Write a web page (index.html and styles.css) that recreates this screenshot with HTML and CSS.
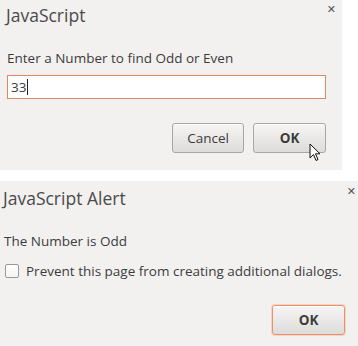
FILE: index.html
```html
<!DOCTYPE html>
<html>
<head>
<meta charset="utf-8">
<link rel="stylesheet" href="styles.css">
</head>
<body>
<div class="dialog prompt">
  <div class="title">JavaScript</div>
  <span class="close">&#x2715;</span>
  <div class="message">Enter a Number to find Odd or Even</div>
  <div class="input"><span>33</span><span class="caret"></span></div>
  <div class="buttons">
    <button class="btn">Cancel</button>
    <button class="btn bold">OK</button>
  </div>
  <svg class="cursor" width="12" height="19" viewBox="0 0 12 19"><path d="M1 1 L1 15 L4.5 11.5 L7 17.5 L9 16.5 L6.5 10.8 L11 10.8 Z" fill="#fff" stroke="#111" stroke-width="1" stroke-linejoin="round"/></svg>
</div>
<div class="dialog alert">
  <div class="title">JavaScript Alert</div>
  <span class="close">&#x2715;</span>
  <div class="message">The Number is Odd</div>
  <label class="check"><span class="box"></span>Prevent this page from creating additional dialogs.</label>
  <div class="buttons">
    <button class="btn bold default">OK</button>
  </div>
</div>
</body>
</html>
```
FILE: styles.css
```css
html, body { margin: 0; padding: 0; background: #fff; }
body { width: 358px; height: 346px; overflow: hidden; font-family: "Open Sans", "DejaVu Sans", sans-serif; color: #3c3c3c; }
.dialog { position: relative; background: #f2f1f0; display: flex; flex-direction: column; box-sizing: border-box; }
.prompt { width: 342px; height: 170px; padding: 4px 16px 0 7px; margin-bottom: 11px; }
.alert { width: 358px; height: 165px; padding: 6px 13px 0 4px; }
.title { font-size: 17.5px; line-height: 22px; color: #4a4a4a; margin-left: -1px; }
.close { position: absolute; top: 1px; right: 6px; font-size: 11px; font-weight: bold; color: #555; }
.alert .close { right: 2px; top: 2px; }
.message { font-size: 13.5px; line-height: 18px; margin-top: 23px; }
.alert .message { margin-top: 23px; }
.input { margin-top: 8px; height: 24px; box-sizing: border-box; border: 1px solid #e0876a; background: #fff; display: flex; align-items: center; padding-left: 3px; font-size: 13.5px; }
.caret { width: 1px; height: 16px; background: #222; margin-left: 1px; }
.buttons { display: flex; justify-content: flex-end; gap: 9px; margin-top: 24px; }
.alert .buttons { margin-top: 25px; }
.btn { width: 73px; height: 30px; box-sizing: border-box; border: 1px solid #a9a7a5; border-radius: 3px; background: linear-gradient(#f6f5f4, #dedcda); font-family: inherit; font-size: 13.5px; color: #3c3c3c; padding: 0; box-shadow: inset 0 1px 0 #fff; }
.prompt .btn:first-child { width: 72px; }
.bold { font-weight: bold; }
.default { border-color: #e9906d; box-shadow: 0 0 0 1px #f8d3c3, inset 0 1px 0 #fff; }
.check { display: flex; align-items: center; font-size: 13.5px; margin-top: 12px; margin-left: 1px; }
.box { width: 12px; height: 12px; border: 1px solid #9a9896; border-radius: 2px; background: linear-gradient(#fff, #f4f4f4); margin-right: 7px; }
.cursor { position: absolute; left: 309px; top: 143px; }
```
